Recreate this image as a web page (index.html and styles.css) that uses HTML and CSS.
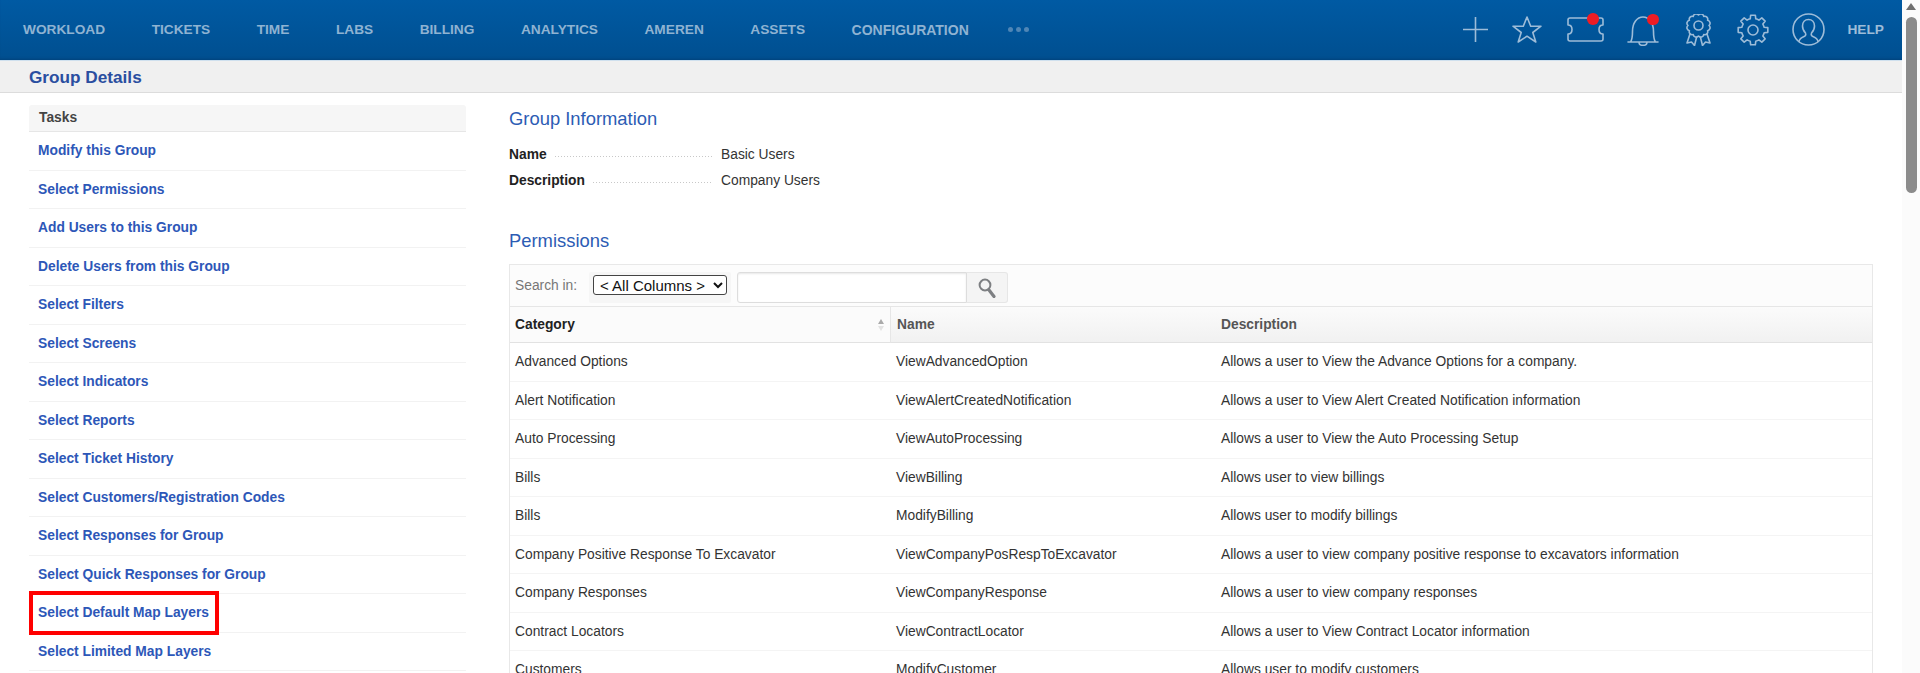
FILE: index.html
```html
<!DOCTYPE html>
<html lang="en">
<head>
<meta charset="utf-8">
<title>Group Details</title>
<link rel="stylesheet" href="styles.css">
</head>
<body>
<div class="page">
  <div class="viewport">
    <header class="topbar">
      <nav class="nav">
        <a>WORKLOAD</a><a>TICKETS</a><a>TIME</a><a>LABS</a><a>BILLING</a><a>ANALYTICS</a><a>AMEREN</a><a>ASSETS</a><a class="nav-wide">CONFIGURATION</a>
        <span class="more"><i></i><i></i><i></i></span>
      </nav>
      <div class="tools">
        <svg class="ic" width="25" height="25" viewBox="0 0 25 25"><path d="M12.500 0v25M0 12.500h25"/></svg>
        <svg class="ic t-star" width="30" height="27" viewBox="0 0 30 27"><path d="M15 1l3.700 9.200H29l-8.200 6.300 3 9.500L15 20.200 6.200 26l3-9.500L1 10.200h10.300z"/></svg>
        <span class="badged t-ticket">
          <svg class="ic" width="37" height="25" viewBox="0 0 37 25"><path d="M3 1h31a2 2 0 0 1 2 2v5c-3 0-4 2-4 4.500s1 4.500 4 4.500v5a2 2 0 0 1-2 2H3a2 2 0 0 1-2-2v-5c3 0 4-2 4-4.500S4 8 1 8V3a2 2 0 0 1 2-2z"/></svg>
          <b class="dot dot-ticket"></b>
        </span>
        <span class="badged t-bell">
          <svg class="ic" width="32" height="32" viewBox="0 0 32 32"><path d="M1 28h30M3.500 28c1.500-2 2-5 2-10.500C5.500 9 10 3 16 3s10.500 6 10.500 14.500c0 5.500.5 8.500 2 10.500M12 28c0 4.500 8 4.500 8 0"/></svg>
          <b class="dot dot-bell"></b>
        </span>
        <svg class="ic t-rosette" width="25" height="32" viewBox="0 0 25 32"><path d="M12.500 1A3 3 0 0 1 17.750 2.410 3 3 0 0 1 21.590 6.250 3 3 0 0 1 23 11.500 3 3 0 0 1 21.590 16.750 3 3 0 0 1 17.750 20.590 3 3 0 0 1 12.500 22 3 3 0 0 1 7.250 20.590 3 3 0 0 1 3.410 16.750 3 3 0 0 1 2 11.500 3 3 0 0 1 3.410 6.250 3 3 0 0 1 7.250 2.410 3 3 0 0 1 12.500 1z"/><circle cx="12.500" cy="11.500" r="4.500"/><path d="M4 20l-3 9 4.500-1 3 3.500 2-8M21 20l3 9-4.500-1-3 3.500-2-8"/></svg>
        <svg class="ic t-gear" width="32" height="32" viewBox="0 0 32 32"><path d="M13.650 1.180L18.350 1.180 18.780 4.840A11.500 11.500 0 0 1 21.920 6.140L24.820 3.860 28.140 7.180 25.860 10.080A11.500 11.500 0 0 1 27.160 13.220L30.820 13.650 30.820 18.350 27.160 18.780A11.500 11.500 0 0 1 25.860 21.920L28.140 24.820 24.820 28.140 21.920 25.860A11.500 11.500 0 0 1 18.780 27.160L18.350 30.820 13.650 30.820 13.220 27.160A11.500 11.500 0 0 1 10.080 25.860L7.180 28.140 3.860 24.820 6.140 21.920A11.500 11.500 0 0 1 4.840 18.780L1.180 18.350 1.180 13.650 4.840 13.220A11.500 11.500 0 0 1 6.140 10.080L3.860 7.180 7.180 3.860 10.080 6.140A11.500 11.500 0 0 1 13.220 4.840z"/><circle cx="16" cy="16" r="5"/></svg>
        <svg class="ic t-user" width="33" height="33" viewBox="0 0 33 33"><circle cx="16.500" cy="16.500" r="15.500"/><path d="M7 28.500c.5-3.500 3.500-4.500 6-5.500 1-1 1-2 .5-3-2-2-3-4-3-7 0-4 2.500-6.500 6-6.500s6 2.500 6 6.500c0 3-1 5-3 7-.5 1-.5 2 .5 3 2.500 1 5.500 2 6 5.500"/></svg>
        <span class="help">HELP</span>
      </div>
    </header>
    <div class="subbar"><h1>Group Details</h1></div>
    <div class="content">
      <aside class="tasks">
        <div class="tasks-title">Tasks</div>
        <ul class="tasks-list">
          <li><a>Modify this Group</a></li>
          <li><a>Select Permissions</a></li>
          <li><a>Add Users to this Group</a></li>
          <li><a>Delete Users from this Group</a></li>
          <li><a>Select Filters</a></li>
          <li><a>Select Screens</a></li>
          <li><a>Select Indicators</a></li>
          <li><a>Select Reports</a></li>
          <li><a>Select Ticket History</a></li>
          <li><a>Select Customers/Registration Codes</a></li>
          <li><a>Select Responses for Group</a></li>
          <li><a>Select Quick Responses for Group</a></li>
          <li class="marked"><a>Select Default Map Layers</a><span class="highlight"></span></li>
          <li><a>Select Limited Map Layers</a></li>
        </ul>
      </aside>
      <main class="details">
        <h2>Group Information</h2>
        <dl class="info">
          <div class="info-row"><dt>Name<span class="leader"></span></dt><dd>Basic Users</dd></div>
          <div class="info-row"><dt>Description<span class="leader"></span></dt><dd>Company Users</dd></div>
        </dl>
        <h2 class="perm-title">Permissions</h2>
        <div class="grid">
          <div class="toolbar">
            <span class="search-label">Search in:</span>
            <span class="select-wrap"><select class="select"><option>&lt; All Columns &gt;</option></select></span>
            <input class="search-input" type="text">
            <span class="search-btn"><svg width="18" height="20" viewBox="0 0 18 20"><circle cx="7" cy="7" r="5.400" fill="none" stroke="#7d7f82" stroke-width="2"/><path d="M11 12l5 6.500" stroke="#7d7f82" stroke-width="3.200" stroke-linecap="round"/></svg></span>
          </div>
          <table class="table">
            <colgroup><col class="c1"><col class="c2"><col></colgroup>
            <thead>
              <tr><th class="sorted">Category<span class="sort"><i class="up"></i><i class="down"></i></span></th><th>Name</th><th>Description</th></tr>
            </thead>
            <tbody>
              <tr><td>Advanced Options</td><td>ViewAdvancedOption</td><td>Allows a user to View the Advance Options for a company.</td></tr>
              <tr><td>Alert Notification</td><td>ViewAlertCreatedNotification</td><td>Allows a user to View Alert Created Notification information</td></tr>
              <tr><td>Auto Processing</td><td>ViewAutoProcessing</td><td>Allows a user to View the Auto Processing Setup</td></tr>
              <tr><td>Bills</td><td>ViewBilling</td><td>Allows user to view billings</td></tr>
              <tr><td>Bills</td><td>ModifyBilling</td><td>Allows user to modify billings</td></tr>
              <tr><td>Company Positive Response To Excavator</td><td>ViewCompanyPosRespToExcavator</td><td>Allows a user to view company positive response to excavators information</td></tr>
              <tr><td>Company Responses</td><td>ViewCompanyResponse</td><td>Allows a user to view company responses</td></tr>
              <tr><td>Contract Locators</td><td>ViewContractLocator</td><td>Allows a user to View Contract Locator information</td></tr>
              <tr><td>Customers</td><td>ModifyCustomer</td><td>Allows user to modify customers</td></tr>
            </tbody>
          </table>
        </div>
      </main>
    </div>
  </div>
  <div class="scrollbar"><span class="arrow"></span><span class="thumb"></span></div>
</div>
</body>
</html>
```
FILE: styles.css
```css
* { box-sizing: border-box; }
html, body { margin: 0; height: 673px; overflow: hidden; background: #fff; }
body { font-family: "Liberation Sans", Arial, sans-serif; font-size: 13.800px; color: #2b2b2b; }
.page { display: flex; height: 673px; overflow: hidden; }
.viewport { flex: 1; min-width: 0; height: 673px; overflow: hidden; }

.topbar { height: 61px; display: flex; align-items: center; justify-content: space-between; padding: 0 18px 1px 23px; background: linear-gradient(#005aa3, #004f90); border-bottom: 1px solid #cfe0ee; box-shadow: inset 0 -3px 3px -2px #00427a; }
.nav { display: flex; align-items: center; gap: 46.500px; font-size: 13.700px; font-weight: 700; color: #8fb3d2; }
.nav-wide { font-size: 14px; }
.more { display: flex; gap: 3px; margin-left: -7px; }
.more i { width: 5px; height: 5px; border-radius: 50%; background: #4f86b6; }
.tools { display: flex; align-items: center; }
.ic { display: block; flex: none; fill: none; stroke: #9dbcd8; stroke-width: 1.600; stroke-linejoin: round; stroke-linecap: round; }
.t-star { margin-left: 24px; }
.t-ticket { margin-left: 25px; }
.t-bell { margin-left: 23px; }
.t-rosette { margin-left: 27px; }
.t-gear { margin-left: 26px; }
.t-user { margin-left: 23px; }
.badged { position: relative; display: block; }
.dot { position: absolute; width: 11.500px; height: 11.500px; border-radius: 50%; background: #ee1c25; }
.dot-ticket { top: -4px; left: 20px; }
.dot-bell { top: 0; left: 20px; }
.help { font-size: 13.700px; font-weight: 700; color: #9dbcd8; margin-left: 22px; }

.subbar { height: 32px; background: #f0f0f0; border-bottom: 1px solid #dcdcdc; padding-left: 29px; }
h1 { margin: 0; font-size: 17.200px; line-height: 32px; font-weight: 700; color: #2a4ea0; }

.content { display: flex; padding: 12px 0 0 29px; }
.tasks { width: 437px; flex: none; }
.tasks-title { height: 27px; line-height: 26px; padding-left: 10px; font-weight: 700; color: #444; background: #f6f6f6; border-bottom: 1px solid #e6e6e6; border-radius: 3px 3px 0 0; }
.tasks-list { list-style: none; margin: 0; padding: 0; }
.tasks-list li { position: relative; height: 38.500px; line-height: 37px; padding-left: 9px; border-bottom: 1px solid #f2f2f2; font-weight: 700; color: #2d57b8; }
.highlight { position: absolute; left: 0; top: -3px; width: 190px; height: 44px; border: 4px solid #f00; }

.details { margin-left: 43px; width: 1364px; flex: none; }
h2 { margin: 0; font-size: 18.400px; line-height: 27px; font-weight: 400; color: #2c5cb4; }
.info { margin: 10px 0 0; }
.info-row { display: grid; grid-template-columns: 203px auto; column-gap: 9px; height: 26px; line-height: 26px; }
.info-row dt { display: flex; align-items: center; font-weight: 700; color: #222; }
.leader { flex: 1; height: 1px; margin: 2px 0 0 8px; background: repeating-linear-gradient(90deg, #c8c8c8 0 1px, transparent 1px 3px); }
.info-row dd { margin: 0; white-space: nowrap; color: #333; }
.perm-title { margin-top: 33px; }

.grid { margin-top: 10px; border: 1px solid #e8e8e8; border-bottom: 0; }
.toolbar { height: 42px; display: flex; align-items: center; padding-left: 5px; background: #fcfcfc; border-bottom: 1px solid #e6e6e6; }
.search-label { color: #777; width: 74px; }
.select-wrap { height: 31px; margin: 4px 6px 0 0; padding: 3px 4px 0; background: #f6f6f6; border-radius: 2px; display: flex; align-items: flex-start; }
.select { width: 134px; height: 20px; font: 15px "Liberation Sans", Arial, sans-serif; color: #111; background: #fff; border: 1px solid #444; border-radius: 3px; padding: 0 2px; }
.search-input { width: 230px; height: 31px; margin: 4px 0 0; background: #fff; border: 1px solid #ddd; border-radius: 3px 0 0 3px; box-shadow: inset 0 1px 2px #e8e8e8; }
.search-btn { width: 41px; height: 31px; margin-top: 4px; background: #f4f4f4; border: 1px solid #e6e6e6; border-left: 0; border-radius: 0 3px 3px 0; display: flex; align-items: center; justify-content: center; }

.table { width: 100%; border-collapse: separate; border-spacing: 0; table-layout: fixed; }
.c1 { width: 380px; }
.c2 { width: 325px; }
.table th { height: 36px; padding: 0 6px; text-align: left; font-weight: 700; color: #555; background: linear-gradient(#fbfbfb, #f1f1f1); border-bottom: 1px solid #e2e2e2; }
.table th:nth-child(2) { border-left: 1px solid #e6e6e6; }
.table th.sorted { position: relative; color: #222; background: #fbfbfb; }
.table th:first-child, .table td:first-child { padding-left: 5px; }
.sort { position: absolute; right: 6px; top: 12px; display: flex; flex-direction: column; gap: 2px; }
.sort i { width: 0; height: 0; border-left: 3px solid transparent; border-right: 3px solid transparent; }
.sort .up { border-bottom: 5px solid #aaa; }
.sort .down { border-top: 5px solid #e2e2e2; }
.table td { height: 38.500px; padding: 0 6px; color: #333; border-bottom: 1px solid #f4f4f4; white-space: nowrap; }

.scrollbar { width: 18px; flex: none; height: 673px; background: #fbfbfb; display: flex; flex-direction: column; align-items: center; }
.arrow { margin-top: 3px; width: 0; height: 0; border-left: 5.500px solid transparent; border-right: 5.500px solid transparent; border-bottom: 7px solid #6f6f6f; }
.thumb { margin-top: 7px; width: 11px; height: 176px; border-radius: 5.500px; background: #8b8b8b; }
```
